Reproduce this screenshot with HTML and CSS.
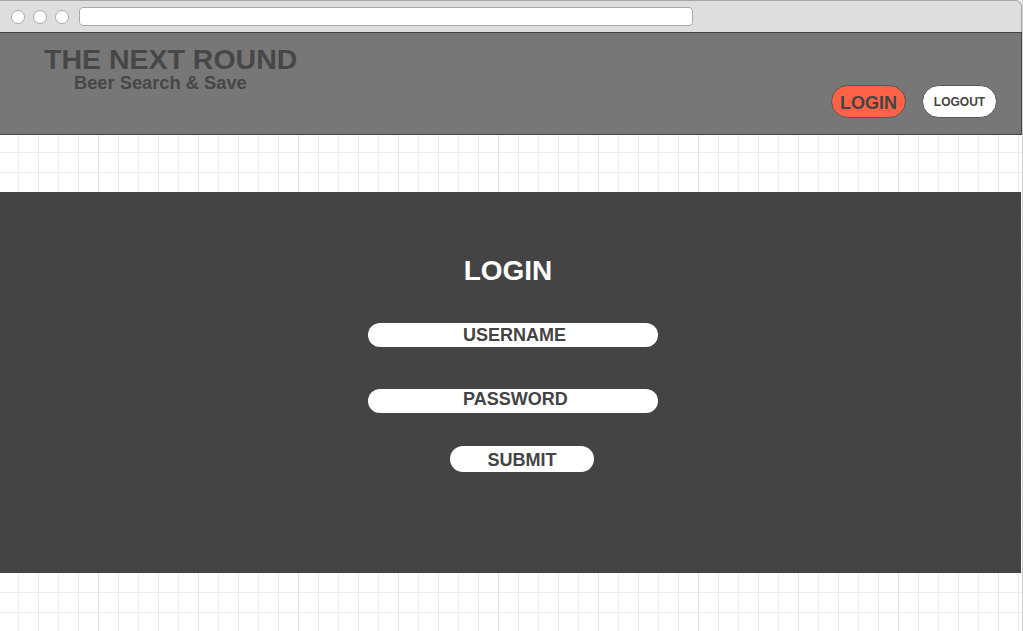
FILE: index.html
```html
<!DOCTYPE html>
<html lang="en">
<head>
<meta charset="utf-8">
<title>The Next Round - Login</title>
<link rel="stylesheet" href="styles.css">
</head>
<body>
<div class="window">
  <div class="chrome">
    <div class="dots">
      <span class="dot"></span>
      <span class="dot"></span>
      <span class="dot"></span>
    </div>
    <div class="address"></div>
  </div>
  <header class="site-header">
    <div class="brand">
      <div class="brand-title">THE NEXT ROUND</div>
      <div class="brand-sub">Beer Search &amp; Save</div>
    </div>
    <nav class="nav">
      <button class="btn btn-login">LOGIN</button>
      <button class="btn btn-logout">LOGOUT</button>
    </nav>
  </header>
  <div class="spacer"></div>
  <section class="login-panel">
    <h1 class="login-title">LOGIN</h1>
    <div class="field field-user">USERNAME</div>
    <div class="field field-pass">PASSWORD</div>
    <button class="submit">SUBMIT</button>
  </section>
</div>
</body>
</html>
```

FILE: styles.css
```css
html, body {
  margin: 0;
  padding: 0;
}
body {
  width: 1023px;
  height: 631px;
  overflow: hidden;
  background: #d2d2d2;
  font-family: "Liberation Sans", Arial, Helvetica, sans-serif;
}
.window {
  width: 1022px;
  height: 631px;
  display: flex;
  flex-direction: column;
  background-color: #ffffff;
  background-image:
    linear-gradient(to right, #e2e2e2 1px, transparent 1px),
    linear-gradient(to right, #ececec 1px, transparent 1px),
    linear-gradient(to bottom, #ececec 1px, transparent 1px);
  background-size: 100px 100%, 20px 100%, 100% 20px;
  background-position: 98px 0, 18px 0, 0 12px;
}
.chrome {
  height: 31px;
  flex: none;
  background: #dedede;
  border-top: 1px solid #a6a6a6;
  border-right: 1px solid #a6a6a6;
  border-top-right-radius: 6px;
  display: flex;
  align-items: flex-start;
  padding-left: 11px;
}
.dots {
  display: flex;
  gap: 8px;
  margin-top: 9px;
}
.dot {
  width: 12px;
  height: 12px;
  border-radius: 50%;
  background: #ffffff;
  border: 1px solid #a9a9a9;
}
.address {
  margin-top: 6px;
  margin-left: 10px;
  width: 612px;
  height: 17px;
  background: #ffffff;
  border: 1px solid #a9a9a9;
  border-radius: 4px;
}
.site-header {
  flex: none;
  height: 101px;
  box-sizing: content-box;
  background: #777777;
  border-top: 1px solid #444444;
  border-bottom: 1px solid #444444;
  border-right: 1px solid #444444;
  display: flex;
  justify-content: space-between;
  align-items: flex-start;
  padding: 0 24px 0 44px;
}
.brand {
  padding-top: 12px;
  color: #474747;
  font-weight: bold;
}
.brand-title {
  font-size: 28.5px;
  line-height: 28px;
}
.brand-sub {
  font-size: 18.3px;
  line-height: 18px;
  margin-top: 1px;
  padding-left: 30px;
}
.nav {
  align-self: flex-end;
  display: flex;
  gap: 16px;
  padding-bottom: 16px;
}
.btn {
  height: 33px;
  border: 1px solid #555555;
  border-radius: 17px;
  font-family: "Liberation Sans", Arial, Helvetica, sans-serif;
  font-weight: bold;
  color: #444444;
  padding: 0;
  display: flex;
  align-items: center;
  justify-content: center;
  cursor: pointer;
}
.btn-login {
  width: 75px;
  background: #ff6347;
  font-size: 18px;
  padding-top: 3px;
}
.btn-logout {
  width: 75px;
  background: #ffffff;
  font-size: 12px;
  padding-top: 1px;
}
.spacer {
  flex: none;
  height: 57px;
}
.login-panel {
  flex: none;
  height: 381px;
  width: 1021px;
  background: #444444;
  display: flex;
  flex-direction: column;
  align-items: center;
}
.login-title {
  margin: 65px 5px 0 0;
  font-size: 28px;
  line-height: 28px;
  font-weight: bold;
  color: #ffffff;
}
.field {
  box-sizing: border-box;
  width: 290px;
  height: 24px;
  margin-left: 5px;
  background: #ffffff;
  border-radius: 12px;
  color: #444444;
  font-size: 18px;
  font-weight: bold;
  line-height: 24px;
  padding-left: 95px;
}
.field-user {
  margin-top: 38px;
}
.field-pass {
  margin-top: 42px;
  line-height: 21px;
}
.submit {
  margin-top: 33px;
  margin-left: 23px;
  width: 144px;
  height: 26px;
  border: none;
  border-radius: 13px;
  background: #ffffff;
  color: #444444;
  font-family: "Liberation Sans", Arial, Helvetica, sans-serif;
  font-size: 18px;
  font-weight: bold;
  padding: 2px 0 0 0;
  cursor: pointer;
}
```
